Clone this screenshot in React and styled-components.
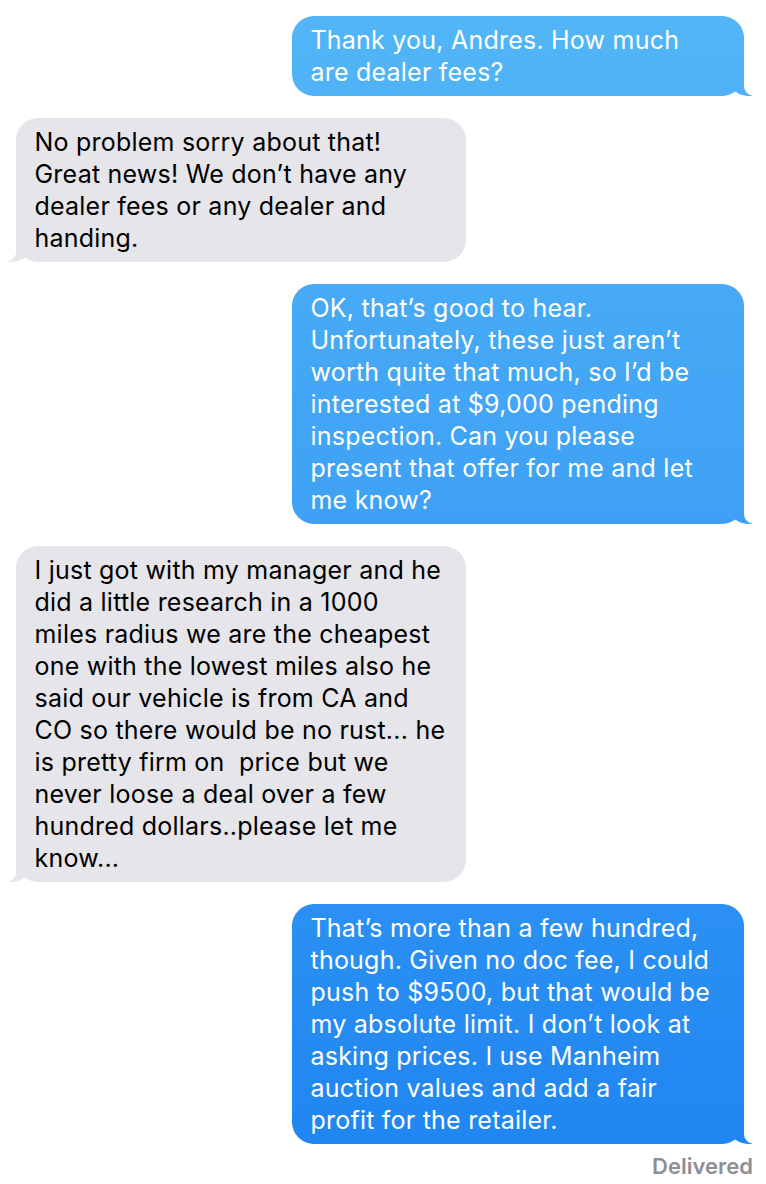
import React from "react";
import styled, { createGlobalStyle } from "styled-components";

const Global = createGlobalStyle`
  html, body { margin: 0; padding: 0; background: #fff; }
  body { font-family: Inter, "Noto Sans", "Liberation Sans", sans-serif; -webkit-font-smoothing: antialiased; }
`;

const BLUE_GRADIENT = "linear-gradient(180deg, #53b6f7 0px, #3c9ff5 560px, #1e84f1 1184px)";

const Thread = styled.div`
  display: flex;
  flex-direction: column;
  gap: 22px;
  padding: 16px 22px 0 16px;
  width: 766px;
  box-sizing: border-box;
`;

const Bubble = styled.div`
  position: relative;
  box-sizing: border-box;
  width: ${(p) => (p.$me ? "452px" : "450px")};
  align-self: ${(p) => (p.$me ? "flex-end" : "flex-start")};
  padding: 8px 14px 8px 18.5px;
  border-radius: 22px;
  font-size: 25px;
  line-height: 32px;
  letter-spacing: 0.22px;
  color: ${(p) => (p.$me ? "#fff" : "#000")};
  background: ${(p) => (p.$me ? BLUE_GRADIENT : "#e5e5ea")};
  background-attachment: ${(p) => (p.$me ? "fixed" : "scroll")};
  z-index: 0;

  &::before {
    content: "";
    position: absolute;
    bottom: 0;
    height: 24px;
    width: 22px;
    z-index: -1;
    background: ${(p) => (p.$me ? BLUE_GRADIENT : "#e5e5ea")};
    background-attachment: ${(p) => (p.$me ? "fixed" : "scroll")};
    ${(p) =>
      p.$me
        ? "right: -8px; border-bottom-left-radius: 18px 15px;"
        : "left: -8px; border-bottom-right-radius: 18px 15px;"}
  }

  &::after {
    content: "";
    position: absolute;
    bottom: 0;
    height: 24px;
    width: 14px;
    z-index: -1;
    background: #fff;
    ${(p) =>
      p.$me
        ? "right: -14px; border-bottom-left-radius: 10px;"
        : "left: -14px; border-bottom-right-radius: 10px;"}
  }
`;

const Line = styled.span`
  display: block;
  white-space: pre;
`;

const Status = styled.div`
  align-self: flex-end;
  margin-top: -12px;
  margin-right: -9px;
  font-size: 22px;
  font-weight: 600;
  color: #8e8e93;
  line-height: 24px;
`;

const messages = [
  { me: true, lines: ["Thank you, Andres. How much", "are dealer fees?"] },
  {
    me: false,
    lines: [
      "No problem sorry about that!",
      "Great news! We don’t have any",
      "dealer fees or any dealer and",
      "handing.",
    ],
  },
  {
    me: true,
    lines: [
      "OK, that’s good to hear.",
      "Unfortunately, these just aren’t",
      "worth quite that much, so I’d be",
      "interested at $9,000 pending",
      "inspection. Can you please",
      "present that offer for me and let",
      "me know?",
    ],
  },
  {
    me: false,
    lines: [
      "I just got with my manager and he",
      "did a little research in a 1000",
      "miles radius we are the cheapest",
      "one with the lowest miles also he",
      "said our vehicle is from CA and",
      "CO so there would be no rust... he",
      "is pretty firm on  price but we",
      "never loose a deal over a few",
      "hundred dollars..please let me",
      "know...",
    ],
  },
  {
    me: true,
    lines: [
      "That’s more than a few hundred,",
      "though. Given no doc fee, I could",
      "push to $9500, but that would be",
      "my absolute limit. I don’t look at",
      "asking prices. I use Manheim",
      "auction values and add a fair",
      "profit for the retailer.",
    ],
  },
];

export default function App() {
  return (
    <>
      <Global />
      <Thread>
        {messages.map((m, i) => (
          <Bubble key={i} $me={m.me}>
            {m.lines.map((l, j) => (
              <Line key={j}>{l}</Line>
            ))}
          </Bubble>
        ))}
        <Status>Delivered</Status>
      </Thread>
    </>
  );
}
